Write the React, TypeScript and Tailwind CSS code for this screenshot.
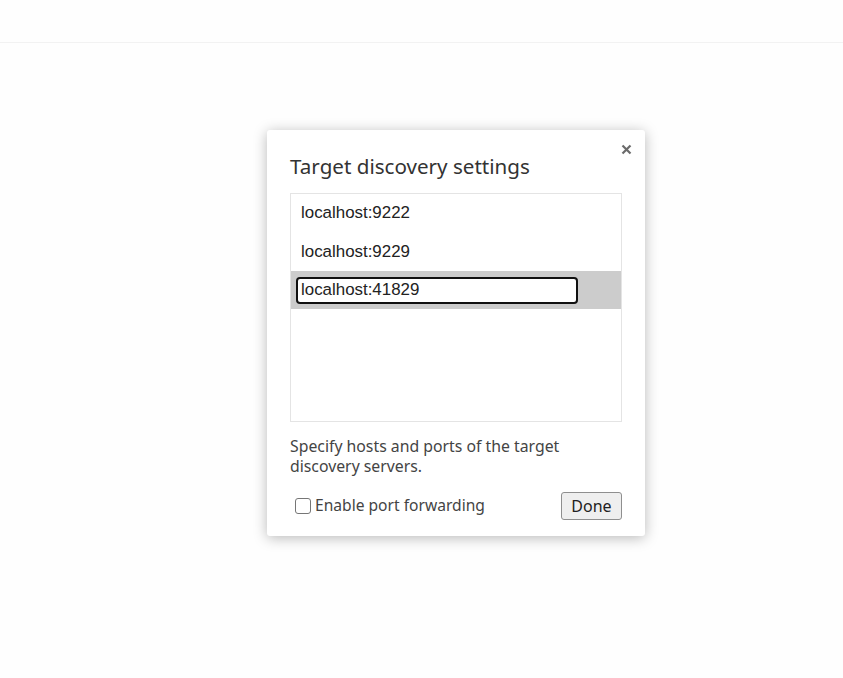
import React from "react";

export default function App() {
  const ui = { fontFamily: '"Noto Sans", "Open Sans", sans-serif' };
  const arial = { fontFamily: '"Liberation Sans", Arial, sans-serif' };
  return (
    <div className="w-[843px] h-[678px] bg-[#fefefe] relative overflow-hidden">
      <div className="h-[43px] border-b border-[#f2f2f2]" />
      <div
        className="absolute left-[267px] top-[130px] w-[378px] h-[406px] bg-white rounded-[3px] shadow-[0_2px_14px_rgba(0,0,0,0.28)] flex flex-col px-[23px]"
        style={ui}
      >
        <button className="absolute right-[12px] top-[12px] w-[14px] h-[14px] flex items-center justify-center">
          <svg width="11" height="11" viewBox="0 0 11 11">
            <path d="M1.5 1.5 L9.5 9.5 M9.5 1.5 L1.5 9.5" stroke="#6b6b6b" strokeWidth="2.2" />
          </svg>
        </button>
        <div className="pt-[22px] text-[20.6px] leading-[28px] text-[#333333]">
          Target discovery settings
        </div>
        <div className="mt-[13px] h-[229px] border border-[#e4e4e4] flex flex-col" style={arial}>
          <div className="h-[38px] flex items-center pl-[10px] text-[16.9px] text-[#222]">localhost:9222</div>
          <div className="h-[39px] flex items-center pl-[10px] text-[16.9px] text-[#222]">localhost:9229</div>
          <div className="h-[38px] bg-[#cccccc] flex items-center pl-[5px]">
            <div className="w-[282px] h-[27px] bg-white border-2 border-[#111] rounded-[4px] flex items-center pl-[3px] text-[16.9px] text-[#222]">
              localhost:41829
            </div>
          </div>
        </div>
        <div className="mt-[14px] text-[15.8px] leading-[20px] text-[#444]">
          Specify hosts and ports of the target discovery servers.
        </div>
        <div className="mt-[16px] flex items-center justify-between">
          <label className="flex items-center text-[15.6px] text-[#444]">
            <span className="w-[16px] h-[16px] border border-[#767676] rounded-[3px] bg-white ml-[5px] mr-[4px]" />
            Enable port forwarding
          </label>
          <button className="w-[61px] h-[28px] border border-[#8f8f8f] rounded-[3px] bg-[#efefef] text-[16px] text-[#222]">
            Done
          </button>
        </div>
      </div>
    </div>
  );
}
